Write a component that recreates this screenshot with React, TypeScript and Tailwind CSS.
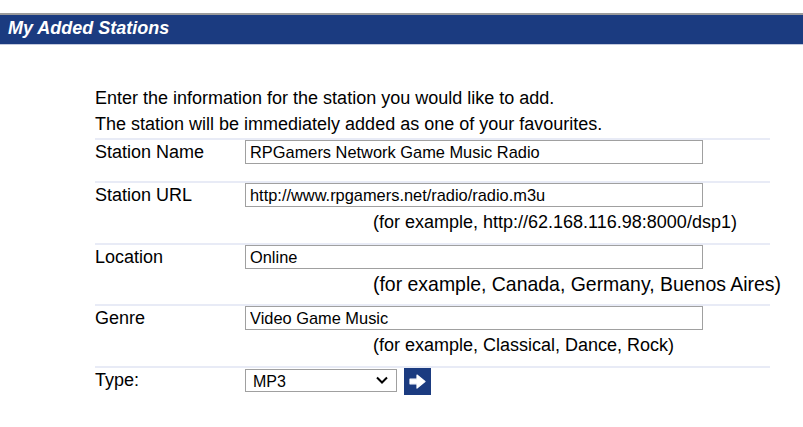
import React from "react";

const font = { fontFamily: '"Liberation Sans", Arial, sans-serif' };

function Row({
  label,
  h,
  children,
}: {
  label: string;
  h: string;
  children: React.ReactNode;
}) {
  return (
    <div className={`flex border-t-2 border-[#e8ebf6] ${h}`}>
      <div className="w-[150px] shrink-0 pt-[2px] text-[18px] leading-[20px] text-black">{label}</div>
      <div className="flex-1">{children}</div>
    </div>
  );
}

function TextInput({ value }: { value: string }) {
  return (
    <input
      type="text"
      defaultValue={value}
      className="block h-[24px] w-[458px] border border-[#a0a0a0] bg-white pl-[4px] text-[16.4px] leading-[20px] text-black outline-none"
      style={font}
    />
  );
}

export default function App() {
  return (
    <div className="h-[427px] w-full overflow-hidden bg-white pt-[13px]" style={font}>
      <div className="h-[32px] border-t-2 border-b border-t-[#9b9b9b] border-b-[#c3c9dd] bg-[#1b3b80] pl-[8px] pb-[2px] text-[18px] font-bold italic leading-[27px] text-white">
        My Added Stations
      </div>
      <div className="ml-[95px] mt-[40px] w-[675px]">
        <div className="text-[18px] leading-[26px] text-black">
          <div>Enter the information for the station you would like to add.</div>
          <div>The station will be immediately added as one of your favourites.</div>
        </div>
        <div className="mt-[1px]">
          <Row label="Station Name" h="h-[43px]">
            <TextInput value="RPGamers Network Game Music Radio" />
          </Row>
          <Row label="Station URL" h="h-[62px]">
            <TextInput value="http://www.rpgamers.net/radio/radio.m3u" />
            <div className="mt-[5px] whitespace-nowrap pl-[128px] text-[18px] leading-[20px] text-black">
              (for example, http://62.168.116.98:8000/dsp1)
            </div>
          </Row>
          <Row label="Location" h="h-[61px]">
            <TextInput value="Online" />
            <div className="mt-[4px] whitespace-nowrap pl-[128px] text-[19.45px] leading-[22px] text-black">
              (for example, Canada, Germany, Buenos Aires)
            </div>
          </Row>
          <Row label="Genre" h="h-[62px]">
            <TextInput value="Video Game Music" />
            <div className="mt-[5px] whitespace-nowrap pl-[128px] text-[18px] leading-[20px] text-black">
              (for example, Classical, Dance, Rock)
            </div>
          </Row>
          <Row label="Type:" h="h-[40px]">
            <div className="flex items-start">
              <div className="relative mt-[1px] h-[23px] w-[152px] border border-[#a0a0a0] bg-white">
                <select
                  defaultValue="MP3"
                  className="h-full w-full appearance-none bg-transparent pl-[7px] text-[16px] leading-[20px] text-black outline-none"
                  style={font}
                >
                  <option>MP3</option>
                  <option>WMA</option>
                  <option>Real</option>
                </select>
                <svg
                  className="pointer-events-none absolute right-[8px] top-[6px]"
                  width="12"
                  height="8"
                  viewBox="0 0 12 8"
                >
                  <polyline points="1,1.5 6,6.5 11,1.5" fill="none" stroke="#000" strokeWidth="2" />
                </svg>
              </div>
              <button className="ml-[7px] flex h-[27px] w-[27px] items-center justify-center bg-[#1b3b80]">
                <svg width="27" height="27" viewBox="0 0 27 27">
                  <path
                    d="M6 11.2 H13 V7 L21 13.5 L13 20 V15.8 H6 Z"
                    fill="#fff"
                    stroke="#fff"
                    strokeWidth="1.2"
                    strokeLinejoin="round"
                  />
                </svg>
              </button>
            </div>
          </Row>
        </div>
      </div>
    </div>
  );
}
